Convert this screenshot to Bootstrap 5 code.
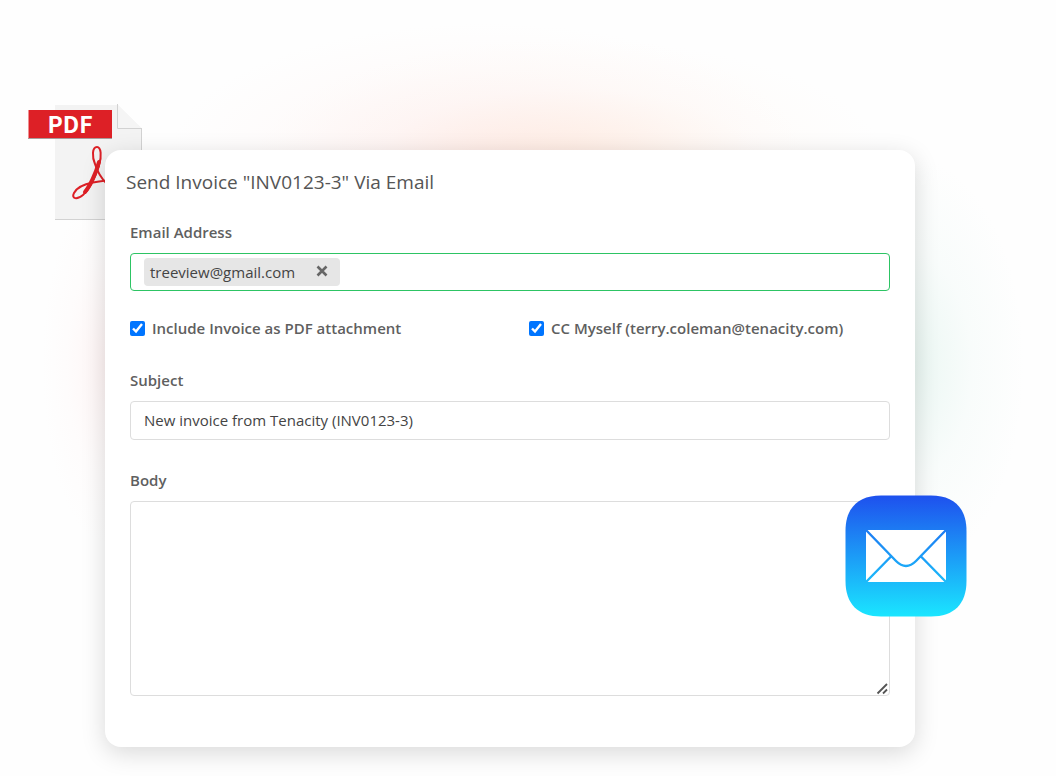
<!DOCTYPE html>
<html lang="en">
<head>
<meta charset="utf-8">
<meta name="viewport" content="width=device-width, initial-scale=1">
<title>Send Invoice Via Email</title>
<link href="https://cdn.jsdelivr.net/npm/bootstrap@5.3.0/dist/css/bootstrap.min.css" rel="stylesheet">
<style>
  body {
    font-family: "Open Sans", sans-serif;
    font-size: 15px;
    line-height: 21px;
    color: #555;
    background:
      radial-gradient(ellipse 30% 16% at 54% 21%, rgba(255, 215, 185, .32), rgba(255, 230, 215, .1) 60%, transparent),
      radial-gradient(ellipse 30% 17% at 46% 20%, rgba(255, 205, 205, .26), rgba(255, 225, 222, .1) 65%, transparent),
      radial-gradient(ellipse 6% 23% at 10% 47%, rgba(255, 200, 200, .18), rgba(255, 225, 225, .08) 60%, transparent),
      radial-gradient(ellipse 11% 27% at 86% 47%, rgba(160, 220, 200, .22), rgba(200, 235, 225, .1) 55%, transparent),
      #fefefe;
  }
  .stage { padding: 150px 141px 29px 105px; }
  .panel {
    background: #fff;
    border-radius: 16px;
    padding: 20px 25px 51px;
    box-shadow: 0 6px 24px rgba(0, 0, 0, .15);
  }
  .panel-title { font-size: 19px; line-height: 24px; font-weight: 500; margin: 0 -4px 28px; }
  .field-label { color: #5f5f5f; font-weight: 600; margin-bottom: 10px; }
  .field { margin-bottom: 30px; }
  .field-box, .field-box:focus {
    font-size: 15px;
    line-height: 21px;
    color: #444;
    padding: 8px 13px;
    border: 1px solid #ddd;
    border-radius: 4px;
    background: #fff;
    box-shadow: none;
  }
  .tag-box { padding: 4px 13px; border-color: #2dc464; margin-bottom: 27px; }
  .tag { background: #e6e6e6; border-radius: 4px; height: 28px; padding: 0 12px 0 6px; gap: 21px; }
  .tag-close { line-height: 0; }
  .tag-input { outline: 0; min-width: 0; }
  .options { --bs-gutter-x: 38px; margin-bottom: 31px; }
  .tick { width: 15px; height: 15px; margin: 0; accent-color: #0075ff; }
  .tick-label { color: #5f5f5f; gap: 7px; font-weight: 600; }
  .body-box { height: 195px; resize: vertical; }
  .body-box::-webkit-resizer {
    background: url("data:image/svg+xml,%3Csvg xmlns='http://www.w3.org/2000/svg' width='15' height='15'%3E%3Cpath d='M3.500 13.500L13 4M9 13.500L13 9.500' stroke='%23555' stroke-width='1.800'/%3E%3C/svg%3E") right bottom no-repeat;
  }
  .pdf-icon { top: -46px; left: -77px; z-index: -1; }
  .mail-icon { right: -52px; bottom: 130px; }
  .stack { z-index: 0; }
  .pdf-text { font-family: "Noto Sans CJK SC", sans-serif; font-weight: 700; font-size: 23px; }
</style>
</head>
<body>
<main class="stage">
  <div class="position-relative stack">
    <svg class="pdf-icon position-absolute" width="116" height="118" viewBox="0 0 116 118" role="img" aria-label="PDF file">
      <path d="M27 1H90L114 25V116H27Z" fill="#f3f3f3"/>
      <path d="M113.500 25V116M27 115.500H114" stroke="#d2d2d2" fill="none"/>
      <path d="M90 0H115V25Z" fill="#fefefe"/>
      <path d="M90 1L114 24.500H90Z" fill="#f5f5f5"/>
      <path d="M89.500 0V24.500H114" stroke="#d2d2d2" fill="none"/>
      <path d="M0 34.500H84" stroke="#a89c9c" fill="none"/>
      <path d="M.5 6H84V34H.5Z" fill="#dd2026"/>
      <text class="pdf-text" x="42" y="29" text-anchor="middle" fill="#fff">PDF</text>
      <g fill="none" stroke="#dd2026" stroke-linecap="round" stroke-linejoin="round">
        <path d="M71 61C74 52 73 43 69 43C64 43 64 53 67 60C70 70 74 75 79 80" stroke-width="2"/>
        <path d="M71 62C67 74 61 86 55 91C49 96 43 95 46 89C49 83 57 80 65 78.500C72 77 80 76 92 76" stroke-width="2"/>
        <path d="M71 58C68 69 62 82 57 88" stroke-width="4"/>
      </g>
    </svg>

    <form class="panel">
      <h1 class="panel-title">Send Invoice "INV0123-3" Via Email</h1>

      <label class="field-label d-block" for="email">Email Address</label>
      <div class="field-box tag-box d-flex align-items-center">
        <span class="tag d-inline-flex align-items-center">
          treeview@gmail.com
          <button type="button" class="tag-close btn p-0 border-0" aria-label="Remove treeview@gmail.com">
            <svg width="12" height="14" viewBox="0 0 12 14"><path d="M1.500 1.500L10.500 10.500M10.500 1.500L1.500 10.500" stroke="#666" stroke-width="2.600"/></svg>
          </button>
        </span>
        <input id="email" type="email" class="tag-input flex-grow-1 border-0 bg-transparent p-0">
      </div>

      <div class="row options">
        <div class="col-6">
          <label class="tick-label d-flex align-items-center"><input class="tick" type="checkbox" checked>Include Invoice as PDF attachment</label>
        </div>
        <div class="col-6">
          <label class="tick-label d-flex align-items-center"><input class="tick" type="checkbox" checked>CC Myself (terry.coleman@tenacity.com)</label>
        </div>
      </div>

      <div class="field">
        <label class="field-label d-block" for="subject">Subject</label>
        <input id="subject" type="text" class="field-box form-control" value="New invoice from Tenacity (INV0123-3)">
      </div>

      <label class="field-label d-block" for="message">Body</label>
      <textarea id="message" class="field-box body-box form-control"></textarea>
    </form>

    <svg class="mail-icon position-absolute" width="122" height="122" viewBox="0 0 122 122" role="img" aria-label="Mail">
      <defs>
        <linearGradient id="sky" gradientUnits="userSpaceOnUse" x1="0" y1="1" x2="0" y2="121">
          <stop offset="0" stop-color="#1e51ee"/>
          <stop offset="1" stop-color="#1ae5ff"/>
        </linearGradient>
      </defs>
      <path d="M36 .5H86C109 .5 121.500 13 121.500 36V86C121.500 109 109 121.500 86 121.500H36C13 121.500 .5 109 .5 86V36C.5 13 13 .5 36 .5Z" fill="url(#sky)"/>
      <rect x="21" y="35" width="80" height="52" fill="#fff"/>
      <path d="M21 35L51 66Q61 76 71 66L101 35M21 87L46 61.500M101 87L76 61.500" fill="none" stroke="url(#sky)" stroke-width="2.400"/>
    </svg>
  </div>
</main>
<script src="https://cdn.jsdelivr.net/npm/bootstrap@5.3.0/dist/js/bootstrap.bundle.min.js"></script>
</body>
</html>
